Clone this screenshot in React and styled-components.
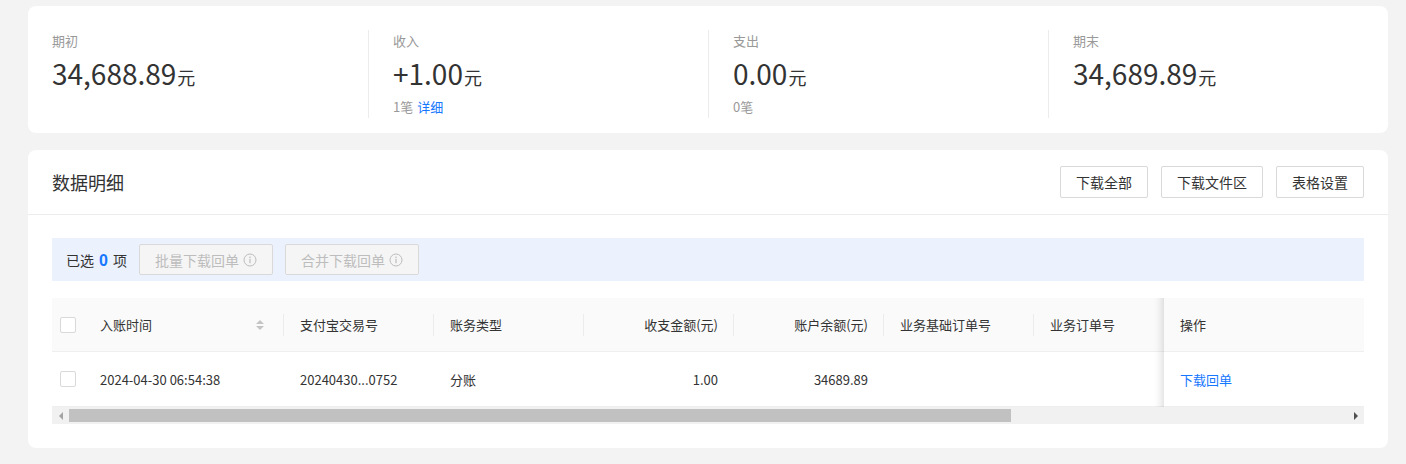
import React from "react";
import styled, { createGlobalStyle } from "styled-components";

const GlobalStyle = createGlobalStyle`
  html, body {
    margin: 0;
    padding: 0;
    background: #f3f3f3;
  }
  body {
    font-family: "Noto Sans CJK SC", "Noto Sans", sans-serif;
    color: #333;
    font-size: 13px;
  }
`;

const Page = styled.div`
  padding: 6px 18px 16px 28px;
  display: flex;
  flex-direction: column;
  gap: 17px;
`;

const Card = styled.div`
  background: #fff;
  border-radius: 8px;
`;

const StatsCard = styled(Card)`
  display: grid;
  grid-template-columns: repeat(4, 1fr);
  padding: 24px 0 15px;
`;

const Stat = styled.div`
  height: 88px;
  padding: 0 24px;
  border-left: ${(p) => (p.$first ? "none" : "1px solid #ececec")};
`;

const StatLabel = styled.div`
  font-size: 13px;
  line-height: 20px;
  margin-top: 1px;
  color: #999;
`;

const StatValue = styled.div`
  margin-top: 1px;
  line-height: 42px;
  height: 42px;
  color: #333;
  font-size: 28px;
  span {
    font-size: 18px;
    margin-left: 1px;
  }
`;

const StatSub = styled.div`
  margin-top: 3px;
  font-size: 13px;
  line-height: 20px;
  color: #999;
  a {
    color: #1677ff;
    text-decoration: none;
    margin-left: 4px;
  }
`;

const DetailCard = styled(Card)`
  padding-bottom: 24px;
`;

const CardHeader = styled.div`
  height: 64px;
  padding: 0 24px;
  display: flex;
  align-items: center;
  justify-content: space-between;
  border-bottom: 1px solid #ececec;
`;

const Title = styled.div`
  font-size: 18px;
  color: #333;
`;

const Actions = styled.div`
  display: flex;
  gap: 13px;
`;

const Button = styled.button`
  height: 32px;
  padding: 0 15px;
  border: 1px solid #d9d9d9;
  border-radius: 2px;
  background: ${(p) => (p.disabled ? "#f5f5f5" : "#fff")};
  color: ${(p) => (p.disabled ? "#bdbdbd" : "#333")};
  font-family: inherit;
  font-size: 14px;
  display: inline-flex;
  align-items: center;
  gap: 4px;
  cursor: ${(p) => (p.disabled ? "not-allowed" : "pointer")};
`;

const Body = styled.div`
  padding: 23px 24px 0;
  display: flex;
  flex-direction: column;
  gap: 17px;
`;

const SelectBar = styled.div`
  height: 43px;
  background: #ebf2fd;
  display: flex;
  align-items: center;
  padding-left: 14px;
  gap: 12px;
  font-size: 14px;
  color: #333;
  ${Button} {
    height: 31px;
  }
`;

const Count = styled.div`
  b {
    color: #1677ff;
    font-size: 16px;
    font-family: "Liberation Sans", sans-serif;
    margin: 0 5px;
  }
`;

const Table = styled.div`
  display: flex;
  flex-direction: column;
`;

const TableMain = styled.div`
  display: flex;
`;

const ScrollPane = styled.div`
  flex: 1;
  overflow: hidden;
`;

const COLS = "32px 200px 150px 150px 150px 150px 150px 150px";

const Row = styled.div`
  display: grid;
  grid-template-columns: ${COLS};
  width: max-content;
  height: ${(p) => (p.$head ? "54px" : "55px")};
  background: ${(p) => (p.$head ? "#fafafa" : "#fff")};
  border-bottom: 1px solid #efefef;
  box-sizing: border-box;
`;

const Cell = styled.div`
  position: relative;
  display: flex;
  align-items: center;
  justify-content: ${(p) => (p.$right ? "flex-end" : p.$center ? "center" : "flex-start")};
  padding: ${(p) => (p.$center ? "0" : "0 16px")};
  font-size: 13px;
  color: #333;
  white-space: nowrap;
  overflow: hidden;
  &::after {
    content: "";
    display: ${(p) => (p.$sep ? "block" : "none")};
    position: absolute;
    right: 0;
    top: 50%;
    height: 22px;
    margin-top: -11px;
    width: 1px;
    background: #ececec;
  }
`;

const HeadTitle = styled.span`
  flex: 1;
  text-align: ${(p) => (p.$right ? "right" : "left")};
`;

const SortIcon = styled.span`
  display: inline-flex;
  flex-direction: column;
  gap: 2px;
  margin-right: 4px;
  &::before,
  &::after {
    content: "";
    border-left: 4px solid transparent;
    border-right: 4px solid transparent;
  }
  &::before {
    border-bottom: 4px solid #c4c4c4;
  }
  &::after {
    border-top: 4px solid #c4c4c4;
  }
`;

const Checkbox = styled.span`
  width: 14px;
  height: 14px;
  border: 1px solid #d9d9d9;
  border-radius: 2px;
  background: #fff;
`;

const FixedPane = styled.div`
  width: 200px;
  position: relative;
  &::before {
    content: "";
    position: absolute;
    left: -10px;
    top: 0;
    bottom: 0;
    width: 10px;
    box-shadow: inset -10px 0 8px -8px rgba(0, 0, 0, 0.15);
  }
`;

const FixedCell = styled.div`
  height: ${(p) => (p.$head ? "54px" : "55px")};
  box-sizing: border-box;
  border-bottom: 1px solid #efefef;
  background: ${(p) => (p.$head ? "#fafafa" : "#fff")};
  display: flex;
  align-items: center;
  padding: 0 16px;
  font-size: 13px;
  color: #333;
`;

const Link = styled.a`
  color: #1677ff;
  text-decoration: none;
  font-size: 13px;
`;

const ScrollBar = styled.div`
  height: 17px;
  background: #f1f1f1;
  display: flex;
  align-items: center;
`;

const ArrowBtn = styled.span`
  width: 17px;
  height: 17px;
  display: flex;
  align-items: center;
  justify-content: center;
  &::before {
    content: "";
    border-top: 4px solid transparent;
    border-bottom: 4px solid transparent;
    ${(p) =>
      p.$dir === "left"
        ? "border-right: 4px solid #a3a3a3;"
        : "border-left: 4px solid #505050;"}
  }
`;

const Track = styled.div`
  flex: 1;
  height: 100%;
  display: flex;
  align-items: center;
`;

const Thumb = styled.div`
  height: 13px;
  background: #c1c1c1;
`;

const InfoIcon = () => (
  <svg width="14" height="14" viewBox="0 0 14 14" fill="none">
    <circle cx="7" cy="7" r="6" stroke="#bdbdbd" strokeWidth="1" />
    <circle cx="7" cy="4.2" r="0.8" fill="#bdbdbd" />
    <rect x="6.4" y="5.8" width="1.2" height="4.4" fill="#bdbdbd" />
  </svg>
);

const stats = [
  { label: "期初", value: "34,688.89" },
  { label: "收入", value: "+1.00", sub: "1笔", link: "详细" },
  { label: "支出", value: "0.00", sub: "0笔" },
  { label: "期末", value: "34,689.89" },
];

const columns = [
  { title: "入账时间", sort: true },
  { title: "支付宝交易号" },
  { title: "账务类型" },
  { title: "收支金额(元)", right: true },
  { title: "账户余额(元)", right: true },
  { title: "业务基础订单号" },
  { title: "业务订单号" },
];

const rows = [
  ["2024-04-30 06:54:38", "20240430...0752", "分账", "1.00", "34689.89", "", ""],
];

// visible part of the scrolled table compared with its full width
const scrollRatio = 0.737;

export default function App() {
  return (
    <Page>
      <GlobalStyle />
      <StatsCard>
        {stats.map((s, i) => (
          <Stat key={s.label} $first={i === 0}>
            <StatLabel>{s.label}</StatLabel>
            <StatValue>
              {s.value}
              <span>元</span>
            </StatValue>
            {s.sub && (
              <StatSub>
                {s.sub}
                {s.link && <a href="#">{s.link}</a>}
              </StatSub>
            )}
          </Stat>
        ))}
      </StatsCard>

      <DetailCard>
        <CardHeader>
          <Title>数据明细</Title>
          <Actions>
            <Button>下载全部</Button>
            <Button>下载文件区</Button>
            <Button>表格设置</Button>
          </Actions>
        </CardHeader>
        <Body>
          <SelectBar>
            <Count>
              已选<b>0</b>项
            </Count>
            <Button disabled>
              批量下载回单
              <InfoIcon />
            </Button>
            <Button disabled>
              合并下载回单
              <InfoIcon />
            </Button>
          </SelectBar>

          <Table>
            <TableMain>
              <ScrollPane>
                <Row $head>
                  <Cell $center>
                    <Checkbox />
                  </Cell>
                  {columns.map((c) => (
                    <Cell key={c.title} $right={c.right} $sep>
                      <HeadTitle $right={c.right}>{c.title}</HeadTitle>
                      {c.sort && <SortIcon />}
                    </Cell>
                  ))}
                </Row>
                {rows.map((r, i) => (
                  <Row key={i}>
                    <Cell $center>
                      <Checkbox />
                    </Cell>
                    {r.map((v, j) => (
                      <Cell key={j} $right={columns[j].right}>
                        {v}
                      </Cell>
                    ))}
                  </Row>
                ))}
              </ScrollPane>
              <FixedPane>
                <FixedCell $head>操作</FixedCell>
                {rows.map((r, i) => (
                  <FixedCell key={i}>
                    <Link href="#">下载回单</Link>
                  </FixedCell>
                ))}
              </FixedPane>
            </TableMain>
            <ScrollBar>
              <ArrowBtn $dir="left" />
              <Track>
                <Thumb style={{ width: `${scrollRatio * 100}%` }} />
              </Track>
              <ArrowBtn $dir="right" />
            </ScrollBar>
          </Table>
        </Body>
      </DetailCard>
    </Page>
  );
}
